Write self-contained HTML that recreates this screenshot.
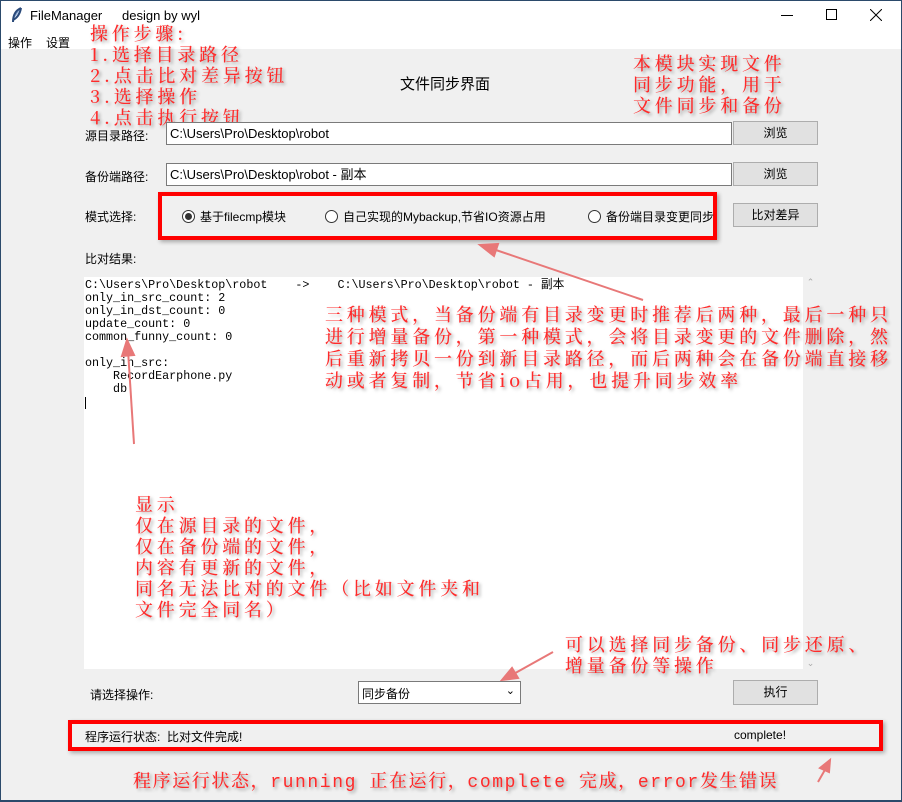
<!DOCTYPE html>
<html><head><meta charset="utf-8"><style>
*{margin:0;padding:0;box-sizing:border-box}
body{width:902px;height:802px;position:relative;overflow:hidden;background:#f0f0f0;font-family:"Liberation Sans","Noto Sans CJK SC",sans-serif;font-size:12px;color:#000}
.a{position:absolute;white-space:nowrap}
.red{color:#ff2a2a;font-family:"Noto Serif CJK SC","WenQuanYi Zen Hei",serif;font-size:18px;text-shadow:2px 2px 3px rgba(0,0,0,.35);line-height:21px;letter-spacing:3.8px;font-weight:500}
.entry{position:absolute;background:#fff;border:1px solid #7a7a7a;height:23px;padding:1px 3px;font-size:13px;line-height:19px}
.btn{position:absolute;background:#e1e1e1;border:1px solid #adadad;text-align:center;font-size:12px}
.radio{display:inline-block;width:13px;height:13px;border:1px solid #333;border-radius:50%;vertical-align:-2px;margin-right:5px;position:relative;background:#fff}
.radio.on::after{content:"";position:absolute;left:2px;top:2px;width:7px;height:7px;border-radius:50%;background:#333}
.mono{font-family:"Liberation Mono","Noto Sans CJK SC",monospace;font-size:11.7px;line-height:13px;white-space:pre}
</style></head><body>
<div class="a" style="left:0;top:0;width:902px;height:49px;background:#fff"></div>
<div class="a" style="left:0;top:0;width:1px;height:802px;background:#2b4a6b"></div>
<div class="a" style="left:901px;top:0;width:1px;height:802px;background:#2b4a6b"></div>
<div class="a" style="left:0;top:0;width:902px;height:1px;background:#2b4a6b"></div>
<div class="a" style="left:0;top:800px;width:902px;height:2px;background:#2b4a6b"></div>
<svg class="a" style="left:10px;top:7px" width="14" height="16"><path d="M11 1 C4 4 3 10 3 15 M11 1 C10 7 7 11 3 13" stroke="#2a4a7a" stroke-width="2" fill="#7a9ac8"/></svg>
<div class="a" style="left:30px;top:8px;font-size:13px">FileManager</div>
<div class="a" style="left:122px;top:8px;font-size:13px">design by wyl</div>
<div class="a" style="left:781px;top:15px;width:12px;height:1px;background:#000"></div>
<div class="a" style="left:826px;top:9px;width:11px;height:11px;border:1px solid #000"></div>
<svg class="a" style="left:870px;top:9px" width="12" height="12"><path d="M0 0L12 12M12 0L0 12" stroke="#000"/></svg>
<div class="a" style="left:8px;top:34px">操作</div>
<div class="a" style="left:46px;top:34px">设置</div>

<div class="a red" style="left:90px;top:23px">操作步骤:<br>1.选择目录路径<br>2.点击比对差异按钮<br>3.选择操作<br>4.点击执行按钮</div>
<div class="a" style="left:400px;top:73px;font-size:15px">文件同步界面</div>
<div class="a red" style="left:633px;top:53px">本模块实现文件<br>同步功能，用于<br>文件同步和备份</div>

<div class="a" style="left:85px;top:127px">源目录路径:</div>
<div class="entry" style="left:166px;top:122px;width:566px">C:\Users\Pro\Desktop\robot</div>
<div class="btn" style="left:733px;top:121px;width:85px;height:24px;line-height:22px">浏览</div>
<div class="a" style="left:85px;top:168px">备份端路径:</div>
<div class="entry" style="left:166px;top:163px;width:566px">C:\Users\Pro\Desktop\robot - 副本</div>
<div class="btn" style="left:733px;top:162px;width:85px;height:24px;line-height:22px">浏览</div>

<div class="a" style="left:85px;top:208px">模式选择:</div>
<div class="a" style="left:158px;top:192px;width:559px;height:48px;border:4px solid #f00;box-shadow:2px 2px 4px rgba(0,0,0,.3)"></div>
<div class="a" style="left:182px;top:208px"><span class="radio on"></span>基于filecmp模块</div>
<div class="a" style="left:325px;top:208px"><span class="radio"></span>自己实现的Mybackup,节省IO资源占用</div>
<div class="a" style="left:588px;top:208px"><span class="radio"></span>备份端目录变更同步</div>
<div class="btn" style="left:733px;top:203px;width:85px;height:24px;line-height:22px">比对差异</div>

<div class="a" style="left:85px;top:250px">比对结果:</div>
<div class="a" style="left:84px;top:277px;width:719px;height:392px;background:#fff"></div>
<div class="a" style="left:803px;top:277px;width:15px;height:392px;background:#f0f0f0;color:#aaa;font-size:9px;text-align:center">⌃<div style="position:absolute;bottom:0;width:15px">⌄</div></div>
<div class="a mono" style="left:85px;top:279px">C:\Users\Pro\Desktop\robot    -&gt;    C:\Users\Pro\Desktop\robot - 副本
only_in_src_count: 2
only_in_dst_count: 0
update_count: 0
common_funny_count: 0

only_in_src:
    RecordEarphone.py
    db</div>
<div class="a" style="left:85px;top:397px;width:1px;height:12px;background:#000"></div>

<div class="a red" style="left:325px;top:303px;line-height:22px">三种模式，当备份端有目录变更时推荐后两种，最后一种只<br>进行增量备份，第一种模式，会将目录变更的文件删除，然<br>后重新拷贝一份到新目录路径，而后两种会在备份端直接移<br>动或者复制，节省io占用，也提升同步效率</div>
<div class="a red" style="left:135px;top:494px">显示<br>仅在源目录的文件，<br>仅在备份端的文件，<br>内容有更新的文件，<br>同名无法比对的文件（比如文件夹和<br>文件完全同名）</div>
<div class="a red" style="left:565px;top:634px">可以选择同步备份、同步还原、<br>增量备份等操作</div>

<svg class="a" style="left:0;top:0" width="902" height="802">
<g stroke="#e87878" stroke-width="2" fill="#e87878">
<line x1="643" y1="300" x2="490" y2="248"/><polygon points="480,245 498,244 494,256"/>
<line x1="134" y1="444" x2="128" y2="350"/><polygon points="127,340 122,356 134,355"/>
<line x1="553" y1="652" x2="510" y2="676"/><polygon points="502,680 512,668 518,678"/>
<line x1="818" y1="782" x2="826" y2="768"/><polygon points="830,760 820,768 829,772"/>
</g></svg>

<div class="a" style="left:90px;top:686px">请选择操作:</div>
<div class="a" style="left:358px;top:681px;width:163px;height:23px;background:#fff;border:1px solid #7a7a7a;padding:3px 3px;font-size:12px">同步备份<span style="position:absolute;right:5px;top:2px;font-size:11px">⌄</span></div>
<div class="btn" style="left:733px;top:680px;width:85px;height:25px;line-height:23px">执行</div>

<div class="a" style="left:68px;top:720px;width:815px;height:31px;border:4px solid #f00;box-shadow:2px 2px 4px rgba(0,0,0,.3)"></div>
<div class="a" style="left:85px;top:728px">程序运行状态:&nbsp; 比对文件完成!</div>
<div class="a" style="left:734px;top:728px">complete!</div>
<div class="a red" style="left:133px;top:773px;letter-spacing:1.6px;font-family:'Liberation Mono','Noto Serif CJK SC',serif;font-size:18px">程序运行状态，running 正在运行，complete 完成，error发生错误</div>
</body></html>
